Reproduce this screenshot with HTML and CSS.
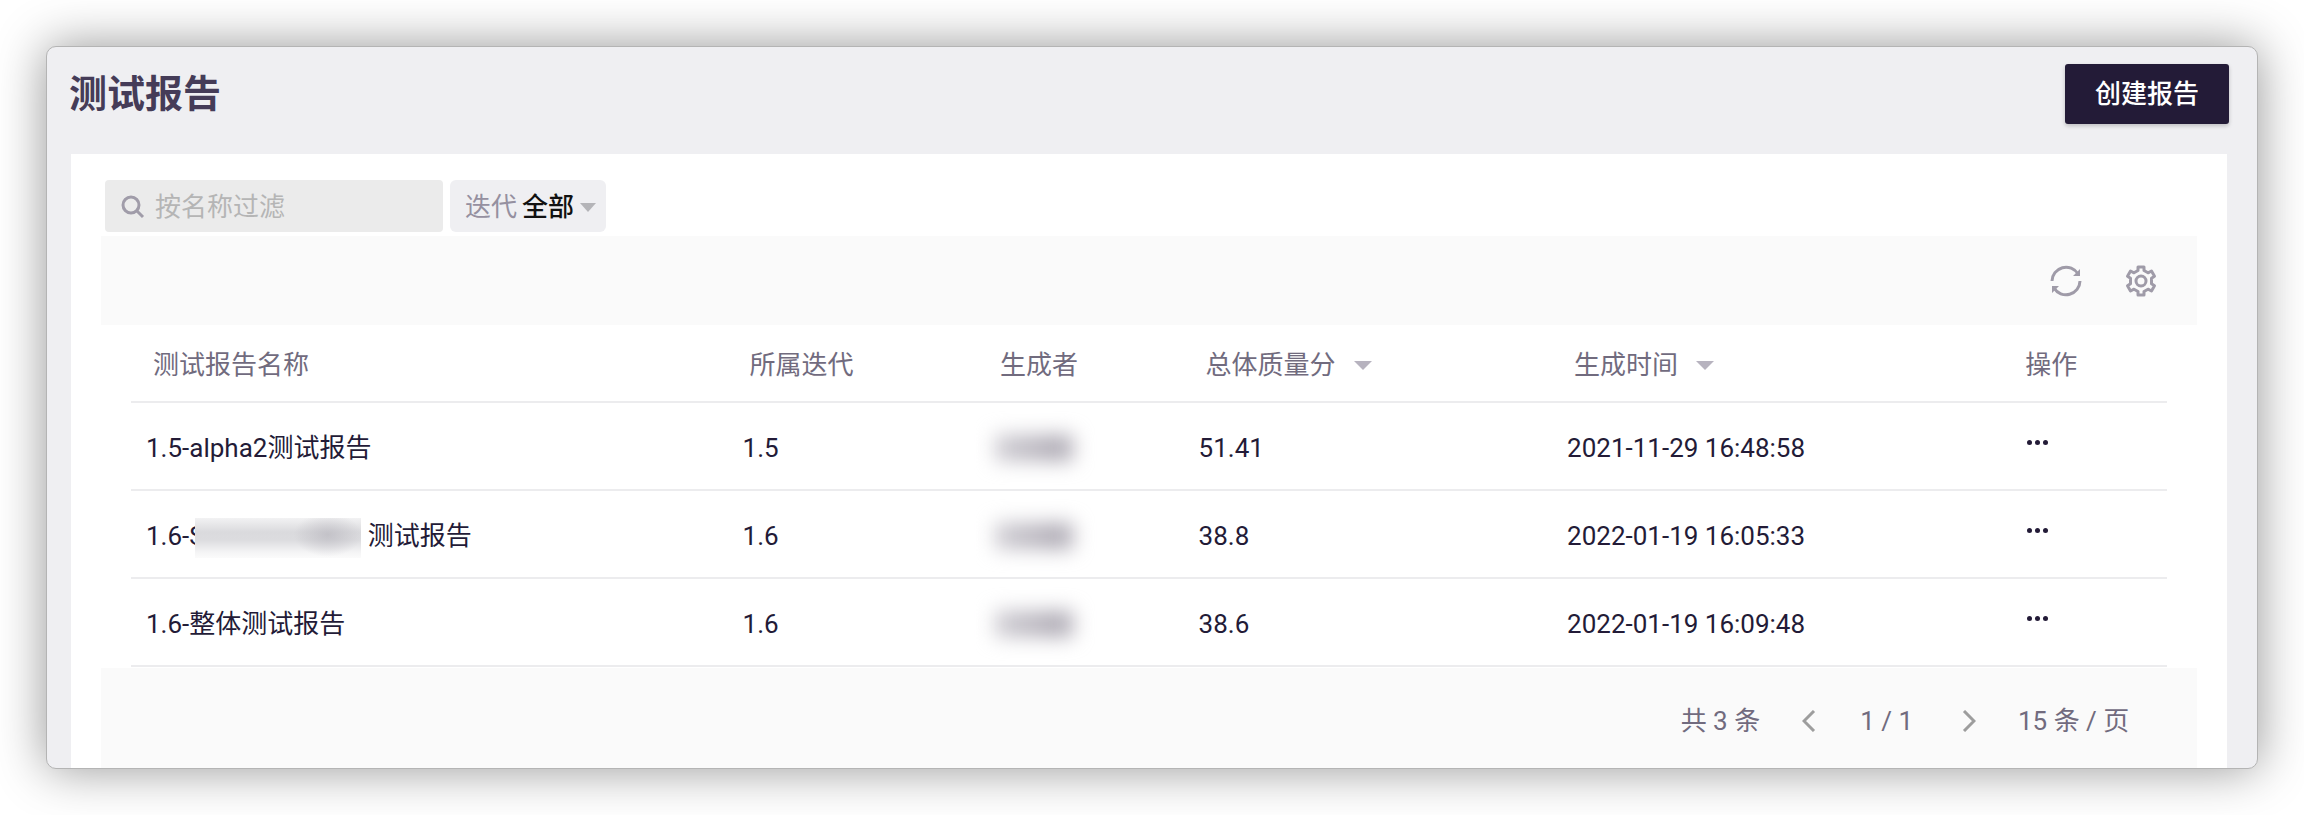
FILE: index.html
```
<!DOCTYPE html>
<html lang="zh-CN">
<head>
    <meta charset="UTF-8">
    <meta name="viewport" content="width=device-width, initial-scale=1.0">
    <title>测试报告</title>
    <link rel="stylesheet" href="styles.css">
</head>
<body>
    <main class="window">
        <header class="header">
            <h1 class="page-title">测试报告</h1>
            <button class="button primary" type="button">创建报告</button>
        </header>

        <section class="panel">
            <div class="filters">
                <label class="search">
                    <svg class="search-icon" viewBox="0 0 24 24" aria-hidden="true">
                        <circle cx="10" cy="10" r="8"/>
                        <path d="M16 16l6 6"/>
                    </svg>
                    <input type="search" class="search-input" placeholder="按名称过滤" aria-label="按名称过滤">
                </label>
                <div class="filter">
                    <label for="iteration" class="filter-label">迭代</label>
                    <select id="iteration" class="filter-select">
                        <option>全部</option>
                    </select>
                    <span class="caret"></span>
                </div>
            </div>

            <div class="toolbar">
                <button class="icon-button" type="button" aria-label="刷新">
                    <svg viewBox="0 0 32 32" aria-hidden="true">
                        <path d="M2 16A14 14 0 0 1 28 9M30 16A14 14 0 0 1 4 23"/>
                        <path class="solid" d="M30 4v7h-7zM2 28v-7h7z"/>
                    </svg>
                </button>
                <button class="icon-button" type="button" aria-label="设置">
                    <svg viewBox="0 0 32 32" aria-hidden="true">
                        <path d="M13 2h6v3.500l4 2.300 3.500-1.800 3 5.200-3 2v5.600l3 2-3 5.200-3.500-1.800-4 2.300V30h-6v-3.500l-4-2.300L5.500 26l-3-5.200 3-2v-5.600l-3-2 3-5.200L9 7.800l4-2.300z"/>
                        <circle cx="16" cy="16" r="5"/>
                    </svg>
                </button>
            </div>

            <div class="table-wrap">
                <table class="report-table">
                    <thead>
                        <tr>
                            <th class="col-name">测试报告名称</th>
                            <th class="col-iteration">所属迭代</th>
                            <th class="col-author">生成者</th>
                            <th class="col-score">总体质量分<span class="caret sort"></span></th>
                            <th class="col-time">生成时间<span class="caret sort"></span></th>
                            <th class="col-action">操作</th>
                        </tr>
                    </thead>
                    <tbody>
                        <tr>
                            <td>1.5-alpha2测试报告</td>
                            <td>1.5</td>
                            <td><span class="masked-author"></span></td>
                            <td>51.41</td>
                            <td>2021-11-29 16:48:58</td>
                            <td><button class="more" type="button" aria-label="更多操作"><i></i><i></i><i></i></button></td>
                        </tr>
                        <tr>
                            <td>1.6-S<span class="masked-name"></span>测试报告</td>
                            <td>1.6</td>
                            <td><span class="masked-author"></span></td>
                            <td>38.8</td>
                            <td>2022-01-19 16:05:33</td>
                            <td><button class="more" type="button" aria-label="更多操作"><i></i><i></i><i></i></button></td>
                        </tr>
                        <tr>
                            <td>1.6-整体测试报告</td>
                            <td>1.6</td>
                            <td><span class="masked-author"></span></td>
                            <td>38.6</td>
                            <td>2022-01-19 16:09:48</td>
                            <td><button class="more" type="button" aria-label="更多操作"><i></i><i></i><i></i></button></td>
                        </tr>
                    </tbody>
                </table>
            </div>

            <footer class="pagination">
                <span>共 3 条</span>
                <div class="pager">
                    <button class="page-button" type="button" aria-label="上一页">
                        <svg viewBox="0 0 14 22" aria-hidden="true"><path d="M12 1L2 11l10 10"/></svg>
                    </button>
                    <span class="page-current">1 / 1</span>
                    <button class="page-button" type="button" aria-label="下一页">
                        <svg viewBox="0 0 14 22" aria-hidden="true"><path d="M2 1l10 10L2 21"/></svg>
                    </button>
                </div>
                <select class="page-size" aria-label="每页条数">
                    <option>15 条 / 页</option>
                </select>
            </footer>
        </section>
    </main>
</body>
</html>
```

FILE: styles.css
```
* {
    margin: 0;
    padding: 0;
    box-sizing: border-box;
}

body {
    display: flex;
    min-height: 100vh;
    padding: 46px;
    background-color: #fff;
    color: #231b37;
    font-family: Roboto, "Noto Sans CJK SC", sans-serif;
    font-size: 26px;
    line-height: 38px;
}

button,
input,
select {
    border: none;
    background: none;
    color: inherit;
    font: inherit;
}

button,
select {
    cursor: pointer;
}

select {
    appearance: none;
}

.window {
    flex: 1;
    display: flex;
    flex-direction: column;
    min-width: 0;
    overflow: hidden;
    border: 1px solid #b4b4b4;
    border-radius: 10px;
    background-color: #efeff2;
    box-shadow: 0 0 50px rgba(0, 0, 0, 0.42);
}

.header {
    display: flex;
    justify-content: space-between;
    align-items: flex-start;
    padding: 17px 28px 30px 22px;
}

.page-title {
    padding-top: 2px;
    color: #453c58;
    font-size: 38px;
    font-weight: 700;
    line-height: 56px;
}

.button {
    height: 60px;
    padding: 0 30px;
    border-radius: 3px;
}

.button.primary {
    background-color: #231b37;
    color: #fff;
    font-weight: 500;
    box-shadow: 0 2px 4px rgba(0, 0, 0, 0.2);
}

.panel {
    flex: 1;
    display: flex;
    flex-direction: column;
    margin: 0 30px 0 24px;
    padding: 26px 30px 0;
    background-color: #fff;
}

.filters {
    display: flex;
    gap: 7px;
    padding: 0 4px 4px;
}

.search {
    display: flex;
    align-items: center;
    width: 338px;
    height: 52px;
    padding: 2px 16px 0;
    gap: 10px;
    border-radius: 4px;
    background-color: #ebebeb;
}

.search-icon {
    flex: none;
    width: 24px;
    height: 24px;
    fill: none;
    stroke: #a09ca9;
    stroke-width: 3;
}

.search-input {
    flex: 1;
    min-width: 0;
    outline: none;
}

.search-input::placeholder {
    color: #b5b5b5;
}

.filter {
    display: flex;
    align-items: center;
    height: 52px;
    padding: 2px 10px 0 15px;
    gap: 5px;
    border-radius: 6px;
    background-color: #efeff2;
}

.filter-label {
    color: #9590a0;
}

.filter-select {
    color: #111;
    font-weight: 500;
}

.caret {
    display: inline-block;
    border: 8px solid transparent;
    border-top: 9px solid #b4b4b8;
    border-bottom: none;
}

.caret.sort {
    margin-left: 18px;
    border-width: 9px 9px 0;
    border-top-color: #b7b3bf;
    vertical-align: 4px;
}

.toolbar {
    display: flex;
    justify-content: flex-end;
    align-items: center;
    height: 89px;
    padding: 0 40px;
    gap: 43px;
    background-color: #fafafa;
}

.icon-button {
    width: 32px;
    height: 32px;
}

.icon-button svg {
    display: block;
    width: 32px;
    height: 32px;
    fill: none;
    stroke: #9f9ba8;
    stroke-width: 3;
    stroke-linejoin: round;
}

.icon-button .solid {
    fill: #9f9ba8;
    stroke: none;
}

.table-wrap {
    padding: 0 30px 1px;
}

.report-table {
    width: 100%;
    table-layout: fixed;
    border-collapse: separate;
    border-spacing: 0;
}

.report-table th,
.report-table td {
    padding: 3px 15px 0;
    border-bottom: 2px solid #ececee;
    text-align: left;
    white-space: nowrap;
}

.report-table th {
    height: 78px;
    padding-left: 22px;
    color: #716b7e;
    font-weight: 400;
}

.report-table td {
    height: 88px;
}

.report-table .col-action {
    padding-left: 15px;
}

.col-name {
    width: 29.3%;
}

.col-iteration {
    width: 12.3%;
}

.col-author {
    width: 10.1%;
}

.col-score {
    width: 18.1%;
}

.col-time {
    width: 22.5%;
}

/* hidden names */
.masked-author {
    display: block;
    width: 78px;
    height: 26px;
    margin-left: 2px;
    background: linear-gradient(90deg, #cfcdd3, #aeaab4 80%);
    filter: blur(10px);
}

.masked-name {
    display: inline-block;
    width: 166px;
    height: 40px;
    margin: -4px 7px -4px -10px;
    background:
        radial-gradient(34px 22px at 80% 42%, rgba(180, 178, 186, 0.6), transparent),
        linear-gradient(#f2f2f3, #dadadd 35%, #dcdcdf 55%, #f4f4f5 85%, #fbfbfb);
    vertical-align: middle;
}

.more {
    display: flex;
    gap: 3px;
    padding: 7px 2px 17px;
}

.more i {
    width: 5px;
    height: 5px;
    border-radius: 50%;
    background-color: #231b37;
}

.pagination {
    flex: 1;
    display: flex;
    justify-content: flex-end;
    align-items: flex-start;
    padding: 34px 67px 28px;
    gap: 42px;
    background-color: #fafafa;
    color: #716b7e;
}

.pager {
    display: flex;
    align-items: center;
    height: 38px;
    gap: 44px;
}

.page-current {
    padding-right: 5px;
}

.page-button,
.page-button svg {
    display: block;
    width: 14px;
    height: 22px;
}

.page-button svg {
    fill: none;
    stroke: #9d9d9d;
    stroke-width: 3;
}
```
